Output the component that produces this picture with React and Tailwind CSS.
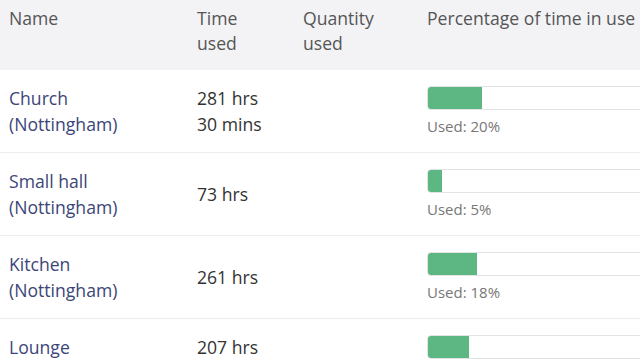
import React from "react";

const rows = [
  { name: ["Church", "(Nottingham)"], time: ["281 hrs", "30 mins"], pct: 20 },
  { name: ["Small hall", "(Nottingham)"], time: ["73 hrs"], pct: 5 },
  { name: ["Kitchen", "(Nottingham)"], time: ["261 hrs"], pct: 18 },
  { name: ["Lounge", "(Nottingham)"], time: ["207 hrs", "15 mins"], pct: 15 },
];

export default function App() {
  return (
    <div
      className="w-[640px] h-[360px] overflow-hidden bg-white"
      style={{ fontFamily: '"Open Sans", "Liberation Sans", sans-serif' }}
    >
      <div className="w-[760px]">
        <div className="flex h-[70px] bg-[#f3f3f5] text-[17.6px] leading-[25px] text-[#555555] pt-[6px]">
          <div className="w-[188px] pl-[9px]">Name</div>
          <div className="w-[106px] pl-[9px]">
            <div>Time</div>
            <div>used</div>
          </div>
          <div className="w-[124px] pl-[9px]">
            <div>Quantity</div>
            <div>used</div>
          </div>
          <div className="flex-1 pl-[9px] whitespace-nowrap">Percentage of time in use</div>
        </div>
        {rows.map((r, i) => (
          <div
            key={i}
            className="flex items-center py-[15px] border-b border-[#ececec] text-[17.6px] leading-[26px]"
          >
            <div className="w-[188px] pl-[9px] text-[#3b4577]">
              {r.name.map((n, j) => (
                <div key={j}>{n}</div>
              ))}
            </div>
            <div className="w-[106px] pl-[9px] text-[#333333]">
              {r.time.map((t, j) => (
                <div key={j}>{t}</div>
              ))}
            </div>
            <div className="w-[124px] pl-[9px]"></div>
            <div className="flex-1 pl-[9px]">
              <div className="w-[272px] h-[24px] rounded-[4px] border border-[#e3e3e3] bg-white overflow-hidden">
                <div
                  className="h-full bg-[#5cb783]"
                  style={{ width: `${r.pct}%` }}
                ></div>
              </div>
              <div className="mt-[6px] text-[15px] leading-[20px] text-[#777777]">
                Used: {r.pct}%
              </div>
            </div>
          </div>
        ))}
      </div>
    </div>
  );
}
